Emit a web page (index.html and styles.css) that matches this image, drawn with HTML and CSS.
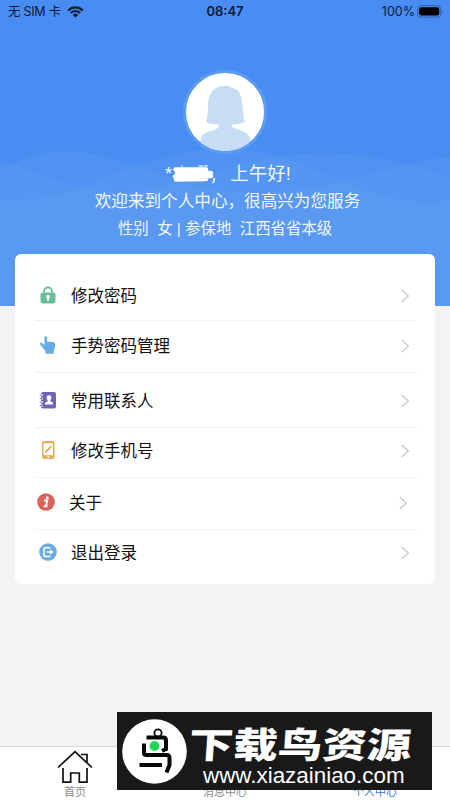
FILE: index.html
```html
<!DOCTYPE html>
<html lang="zh-CN">
<head>
  <meta charset="UTF-8">
  <meta name="viewport" content="width=device-width, initial-scale=1.0">
  <title>个人中心</title>
  <link rel="stylesheet" href="styles.css">
</head>
<body>
  <header class="hero">
    <svg class="waves" viewBox="0 0 450 306" preserveAspectRatio="none">
      <path d="M0 171C25 156 45 150 68 151C130 153 180 193 250 193C340 193 390 162 450 157V306H0Z"/>
      <path d="M0 201C90 203 130 149 225 149C310 149 350 202 430 202L450 201V306H0Z"/>
      <path d="M0 161C35 172 75 192 120 192C190 192 240 153 320 153C370 153 415 165 450 178V306H0Z"/>
    </svg>
    <div class="status">
      <div class="carrier">
        <span>无 SIM 卡</span>
        <svg width="17" height="12" viewBox="0 0 17 12">
          <path d="M1.2 4.4A10.3 10.3 0 0 1 15.8 4.4M3.8 7A6.7 6.7 0 0 1 13.2 7" fill="none" stroke="#071b3b" stroke-width="2.1"/>
          <path d="M8.5 11.6L5.8 8.9A3.8 3.8 0 0 1 11.2 8.9Z" fill="#071b3b"/>
        </svg>
      </div>
      <span class="time">08:47</span>
      <div class="battery">
        <span>100%</span>
        <svg width="27" height="13" viewBox="0 0 27 13">
          <rect x=".7" y=".7" width="23" height="11.4" rx="3.2" fill="none" stroke="#2f60a6"/>
          <rect x="2.2" y="2.2" width="20" height="8.4" rx="2" fill="#000"/>
          <path d="M25.2 4.5Q27 6.4 25.2 8.3Z" fill="#2f60a6"/>
        </svg>
      </div>
    </div>
    <div class="avatar">
      <svg width="78" height="78" viewBox="0 0 78 78">
        <g fill="#c7dcf5">
          <path d="M20 49Q22 43 22 33C22 20 28 13 38 13Q43 12 46 15C54 16 56 24 56.500 34Q57 44 59 49Q53 51.500 46 51.500V54C51 57 59 57 63 63Q65 66 65 70Q54 78 39 78Q24 78 14 69Q15 61 21 59Q30 57 33 54V51.500Q25 51.500 20 49Z"/>
        </g>
      </svg>
    </div>
    <div class="greeting">
      <span>*</span>
      <svg class="mask" width="44" height="20" viewBox="0 0 44 20">
        <path d="M3.500 5.500H34M5 9.500L39 9M3 12.500L39 12M4 15.500L34 15" fill="none" stroke="#fff" stroke-width="4.500" stroke-linecap="round"/>
        <path d="M10 3V1M29 3V1M34 3V1M26 2H36" stroke="#e4effd"/>
        <path d="M42 14Q43 17 40.500 19" fill="none" stroke="#fff" stroke-width="1.500"/>
      </svg>
      <span>上午好!</span>
    </div>
    <p class="welcome">欢迎来到个人中心，很高兴为您服务</p>
    <p class="profile">性别&nbsp; 女 | 参保地&nbsp; 江西省省本级</p>
  </header>

  <main class="menu">
    <a class="row row-password">
      <svg class="icon" viewBox="0 0 18 18">
        <path d="M5 8V5.500a4 4 0 0 1 8 0V8" fill="none" stroke="#70bd9b" stroke-width="1.800"/>
        <rect x="1.500" y="6.500" width="15" height="11" rx="2.500" fill="#6abb97"/>
        <circle cx="9" cy="10.700" r="1.900" fill="#fff"/>
        <path d="M8.200 11h1.600v4H8.200z" fill="#fff"/>
      </svg>
      <span>修改密码</span>
      <svg class="arrow" viewBox="0 0 8 14"><path d="M.7 1L7.300 7L.7 13"/></svg>
    </a>
    <a class="row row-gesture">
      <svg class="icon" viewBox="0 0 18 18">
        <path d="M5.500 1.500Q5.500.3 6.800.3T8.200 1.600V6Q9.600 4.800 10.700 6Q12 5 13.200 6.300Q15.500 5.500 16 8V11.500Q15.800 13.500 14.700 14.500V17.700H6.500V15.200L1.500 9Q.2 7.200 1.700 6.500Q3 6.300 5.500 9Z" fill="#69ade6"/>
      </svg>
      <span>手势密码管理</span>
      <svg class="arrow" viewBox="0 0 8 14"><path d="M.7 1L7.300 7L.7 13"/></svg>
    </a>
    <a class="row row-contacts">
      <svg class="icon" viewBox="0 0 18 18">
        <rect x="2" y="1" width="15" height="16.500" rx="2" fill="#6b67b5"/>
        <path d="M.7 4H4M.7 7.500H4M.7 11H4M.7 14.500H4" stroke="#fff" stroke-width="2"/>
        <path d="M.7 4H3.700M.7 7.500H3.700M.7 11H3.700M.7 14.500H3.700" stroke="#7773bd"/>
        <path d="M10 4.200Q12.600 4.200 12.300 7Q12.100 8.500 11.300 9.200V10.200L14 11.700V13.500H6V11.700L8.700 10.200V9.200Q7.900 8.500 7.700 7Q7.400 4.200 10 4.200Z" fill="#fff"/>
      </svg>
      <span>常用联系人</span>
      <svg class="arrow" viewBox="0 0 8 14"><path d="M.7 1L7.300 7L.7 13"/></svg>
    </a>
    <a class="row row-phone">
      <svg class="icon" viewBox="0 0 18 18">
        <rect x="3" y="0" width="12.500" height="18" rx="2" fill="#e9ac55"/>
        <rect x="4.500" y="2.200" width="9.500" height="12" fill="#fff"/>
        <path d="M6 12L6.600 9.800L11.700 4.500L13 5.800L8 11.200Z" fill="#e9ac55"/>
        <circle cx="9.300" cy="16.100" r="1" fill="#fff"/>
      </svg>
      <span>修改手机号</span>
      <svg class="arrow" viewBox="0 0 8 14"><path d="M.7 1L7.300 7L.7 13"/></svg>
    </a>
    <a class="row row-about">
      <svg class="icon" viewBox="0 0 18 18">
        <circle cx="9" cy="9" r="8.800" fill="#dc615d"/>
        <circle cx="10.200" cy="4.700" r="1.500" fill="#fff"/>
        <path d="M6.900 7.500H10.300L8.900 13.200H10.600M6.600 13.200H8.900" fill="none" stroke="#fff" stroke-width="1.900"/>
      </svg>
      <span>关于</span>
      <svg class="arrow" viewBox="0 0 8 14"><path d="M.7 1L7.300 7L.7 13"/></svg>
    </a>
    <a class="row row-logout">
      <svg class="icon" viewBox="0 0 18 18">
        <circle cx="9" cy="9" r="8.800" fill="#69ade0"/>
        <path d="M10.500 5.500V4.700H6Q5 4.700 5 5.700V12.500Q5 13.500 6 13.500H10.500V12.500M7.800 9H12" fill="none" stroke="#fff" stroke-width="1.500"/>
        <path d="M11 6.200L14.700 9L11 11.800Z" fill="#fff"/>
      </svg>
      <span>退出登录</span>
      <svg class="arrow" viewBox="0 0 8 14"><path d="M.7 1L7.300 7L.7 13"/></svg>
    </a>
  </main>

  <nav class="tabs">
    <a class="tab">
      <svg width="36" height="34" viewBox="0 0 36 34" fill="none" stroke="#111" stroke-width="1.700">
        <path d="M1 17.500L18 1.700L35 17.500M24 4.500H30V12M6 18V32.200H13.700V23H22.300V32.200H30V18"/>
      </svg>
      <span>首页</span>
    </a>
    <a class="tab"><span>消息中心</span></a>
    <a class="tab active"><span>个人中心</span></a>
  </nav>

  <aside class="banner">
    <svg class="logo" width="65" height="65" viewBox="0 0 65 65">
      <circle cx="32.500" cy="32.500" r="32.300" fill="#fff"/>
      <g fill="none" stroke="#080808" stroke-width="4">
        <circle cx="36" cy="14" r="3.600" stroke-width="1.800"/>
        <path d="M24.500 18.500H41Q44 18.500 44 21.500V30L40 32M22 24.500V34Q22 36 24.500 36H44.500Q47.500 36 47.500 39V46L44.500 53.500M17.500 46H40"/>
      </g>
      <circle cx="32.500" cy="27" r="4.900" fill="#20d653"/>
    </svg>
    <div class="banner-text">
      <strong>下载鸟资源</strong>
      <span>www.xiazainiao.com</span>
    </div>
  </aside>
</body>
</html>
```
FILE: styles.css
```css
* {
  box-sizing: border-box;
}
body {
  margin: 0;
  height: 800px;
  display: flex;
  flex-direction: column;
  background: #f3f3f3;
  font-family: "Liberation Sans", "Noto Sans CJK SC", sans-serif;
  overflow: hidden;
}
svg {
  display: block;
  flex: none;
}
.hero {
  position: relative;
  height: 306px;
  flex: none;
  display: flex;
  flex-direction: column;
  align-items: center;
  background: #498df2;
  color: #f0f7ff;
  white-space: nowrap;
}
.waves {
  position: absolute;
  top: 0;
  left: 0;
  width: 100%;
  height: 100%;
  z-index: 0;
}
.waves path {
  fill: #6aa6f0;
  fill-opacity: 0.22;
}
.hero > :not(.waves) {
  z-index: 1;
}
.status {
  width: 100%;
  height: 23px;
  padding: 0 6px 0 8px;
  display: grid;
  grid-template-columns: 1fr auto 1fr;
  align-items: center;
  font: 13px/23px Inter, "Noto Sans CJK SC", sans-serif;
  color: #071b3b;
}
.carrier, .battery {
  display: flex;
  align-items: center;
  gap: 6px;
}
.carrier {
  font-size: 12.5px;
  letter-spacing: -0.3px;
}
.battery {
  justify-content: flex-end;
  gap: 2px;
  font-size: 12.5px;
}
.time {
  margin-right: 2px;
  font-weight: 600;
}
.avatar {
  width: 84px;
  height: 84px;
  margin-top: 47px;
  border: 3px solid #5e9cf4;
  border-radius: 50%;
  background: #fff;
  overflow: hidden;
}
.greeting {
  height: 26px;
  margin: 7px 0 0 6px;
  display: flex;
  align-items: center;
  font-size: 18.5px;
  line-height: 26px;
}
.mask {
  margin-right: 14px;
}
.welcome {
  margin: 2px 0 0 5px;
  font-size: 16.6px;
  line-height: 26px;
}
.profile {
  margin: 1px 0 0;
  font-size: 15.4px;
  line-height: 26px;
}
.menu {
  position: relative;
  z-index: 2;
  width: 420px;
  height: 330px;
  flex: none;
  margin: -52px 0 0 15px;
  padding: 16px 17px 0 20px;
  background: #fff;
  border-radius: 6px;
}
.row {
  height: 52px;
  padding: 0 9px 0 4px;
  display: flex;
  align-items: center;
  border-bottom: 1px solid #f1f1f1;
  font-size: 16.5px;
  color: #111;
}
.icon {
  width: 18px;
  height: 18px;
  margin-right: 14px;
}
.arrow {
  width: 8px;
  height: 14px;
  margin: 2px 0 0 auto;
  fill: none;
  stroke: #c8c8c8;
  stroke-width: 1.3;
}
.row-password {
  height: 51px;
  margin-right: 2px;
  padding-right: 7px;
}
.row-gesture {
  padding-bottom: 4px;
}
.row-contacts {
  height: 55px;
}
.row-phone {
  height: 50px;
  padding-bottom: 5px;
}
.row-about {
  padding: 0 11px 3px 2px;
}
.row-logout {
  height: 44px;
  padding-bottom: 1px;
  border: 0;
}
.tabs {
  height: 54px;
  flex: none;
  margin-top: auto;
  display: grid;
  grid-template-columns: repeat(3, 1fr);
  background: #fff;
  border-top: 1px solid #d8d8d8;
}
.tab {
  display: flex;
  flex-direction: column;
  align-items: center;
  justify-content: flex-end;
  font-size: 11px;
  line-height: 16px;
  color: #8b8b8b;
}
.tab.active {
  color: #3979ca;
}
.banner {
  position: absolute;
  left: 117px;
  top: 712px;
  z-index: 3;
  width: 315px;
  height: 78px;
  padding: 7px 5px;
  display: flex;
  background: #191919;
  color: #fff;
  white-space: nowrap;
}
.banner-text {
  display: flex;
  flex-direction: column;
  margin: 4px 0 0 2px;
}
.banner-text strong {
  font: 900 44.5px/40px "Noto Sans CJK SC", sans-serif;
  transform: skewX(-4deg) scaleY(0.8);
}
.banner-text span {
  margin: 0 0 0 14px;
  font-size: 22.4px;
  line-height: 25px;
}
```
